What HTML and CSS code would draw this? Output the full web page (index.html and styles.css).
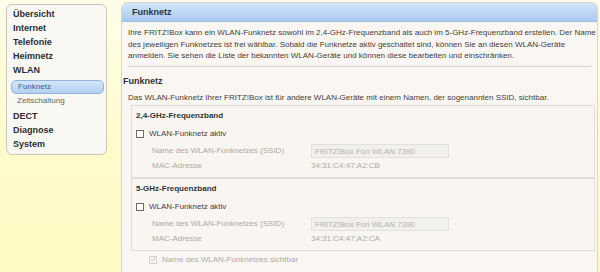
FILE: index.html
```html
<!DOCTYPE html>
<html>
  <head>
    <meta charset="utf-8" />
    <title>FRITZ!Box - Funknetz</title>
    <link rel="stylesheet" href="styles.css">
  </head>
  <body>
    <div class="page">
      <!-- Menu -->
      <nav class="menu">
        <a class="menu-item" href="#">Übersicht</a>
        <a class="menu-item" href="#">Internet</a>
        <a class="menu-item" href="#">Telefonie</a>
        <a class="menu-item" href="#">Heimnetz</a>
        <a class="menu-item" href="#">WLAN</a>
        <a class="menu-sub active" href="#">Funknetz</a>
        <a class="menu-sub" href="#">Zeitschaltung</a>
        <a class="menu-item" href="#">DECT</a>
        <a class="menu-item" href="#">Diagnose</a>
        <a class="menu-item" href="#">System</a>
      </nav>

      <!-- Content -->
      <main class="panel">
        <div class="panel-head">Funknetz</div>
        <div class="panel-body">
          <p class="intro">
            Ihre FRITZ!Box kann ein WLAN-Funknetz sowohl im 2,4-GHz-Frequenzband als auch im 5-GHz-Frequenzband erstellen. Der Name
            des jeweiligen Funknetzes ist frei wählbar. Sobald die Funknetze aktiv geschaltet sind, können Sie an diesen WLAN-Geräte
            anmelden. Sie sehen die Liste der bekannten WLAN-Geräte und können diese bearbeiten und einschränken.
          </p>
          <hr class="divider" />
          <h2 class="section-title">Funknetz</h2>
          <p class="section-text">Das WLAN-Funknetz Ihrer FRITZ!Box ist für andere WLAN-Geräte mit einem Namen, der sogenannten SSID, sichtbar.</p>

          <div class="band">
            <h3 class="band-title">2,4-GHz-Frequenzband</h3>
            <label class="check"><span class="box"></span>WLAN-Funknetz aktiv</label>
            <div class="row">
              <span class="row-label">Name des WLAN-Funknetzes (SSID)</span>
              <span class="field">FRITZ!Box Fon WLAN 7390</span>
            </div>
            <div class="row">
              <span class="row-label">MAC-Adresse</span>
              <span class="value">34:31:C4:47:A2:CB</span>
            </div>
          </div>

          <div class="band">
            <h3 class="band-title">5-GHz-Frequenzband</h3>
            <label class="check"><span class="box"></span>WLAN-Funknetz aktiv</label>
            <div class="row">
              <span class="row-label">Name des WLAN-Funknetzes (SSID)</span>
              <span class="field">FRITZ!Box Fon WLAN 7390</span>
            </div>
            <div class="row">
              <span class="row-label">MAC-Adresse</span>
              <span class="value">34:31:C4:47:A2:CA</span>
            </div>
          </div>

          <label class="check check-off">
            <span class="box box-checked">
              <svg width="7" height="7" viewBox="0 0 7 7"><path d="M1 3.8 L2.8 5.5 L6 1.2" fill="none" stroke="#bdbdb8" stroke-width="1"/></svg>
            </span>
            Name des WLAN-Funknetzes sichtbar
          </label>
        </div>
      </main>
    </div>
  </body>
</html>
```

FILE: styles.css
```css
body {
  margin: 0;
  height: 272px;
  overflow: hidden;
  background: linear-gradient(to bottom, #fffde8, #fffbcb 55%, #fffac4);
  font-family: "Liberation Sans", Arial, sans-serif;
  color: #3a3a3a;
}
.page {
  display: flex;
  align-items: flex-start;
  padding: 2px 2px 0 6px;
}

/* menu */
.menu {
  display: flex;
  flex-direction: column;
  width: 99px;
  margin-top: 2px;
  padding: 2px 0 3px;
  background: #faf8f2;
  border: 1px solid #c9c7bd;
  border-radius: 6px;
}
.menu-item {
  display: block;
  height: 14px;
  line-height: 14px;
  padding-left: 6px;
  font-size: 9px;
  font-weight: bold;
  color: #2b2d35;
  text-decoration: none;
}
.menu-sub {
  display: block;
  height: 12px;
  line-height: 12px;
  margin: 3px 2px 0 4px;
  padding-left: 6px;
  font-size: 8px;
  color: #666;
  text-decoration: none;
  border: 1px solid transparent;
  border-radius: 5px;
}
.menu-sub + .menu-sub {
  height: 14px;
  line-height: 14px;
  margin: 0 2px 1px 4px;
  border: 0;
}
.menu-sub.active {
  color: #3b5f8f;
  background: linear-gradient(to bottom, #d4e6f8, #b3d0f0);
  border-color: #90b4de;
}

/* panel */
.panel {
  flex: 1;
  margin-left: 14px;
  height: 280px;
  background: #faf7f2;
  border: 1px solid #d9d5cb;
  border-radius: 6px 6px 0 0;
}
.panel-head {
  height: 18px;
  line-height: 19px;
  padding-left: 10px;
  font-size: 9px;
  font-weight: bold;
  color: #2f3340;
  background: linear-gradient(to bottom, #d3e6f9, #a9cbef);
  border-bottom: 1px solid #9fc0e4;
  border-radius: 5px 5px 0 0;
}
.panel-body {
  padding: 5px 2px 0 1px;
  font-size: 8px;
}
.intro {
  margin: 0 -2px 0 5px;
  line-height: 11.5px;
  color: #3e3e3e;
}
.divider {
  margin: 4px 4px 8px 5px;
  border: 0;
  border-top: 1px solid #d6d3cb;
}
.section-title {
  margin: 0;
  line-height: 12px;
  font-size: 9px;
  font-weight: bold;
  color: #333;
}
.section-text {
  margin: 5px 0 2px 5px;
  line-height: 11px;
  color: #3e3e3e;
}
.band {
  margin-left: 8px;
  padding: 4px 0 4px 4px;
  background: #f9f6f1;
  border: 1px solid #e0ddd5;
}
.band-title {
  margin: 0;
  line-height: 12px;
  font-size: 8px;
  font-weight: bold;
  color: #333;
}
.check {
  display: flex;
  align-items: center;
  gap: 5px;
  height: 12px;
  margin: 6px 0 3px;
  font-size: 8px;
  color: #3e3e3e;
}
.box {
  display: inline-flex;
  align-items: center;
  justify-content: center;
  width: 6px;
  height: 6px;
  border: 1px solid #6c6c6c;
  background: #fff;
}
.row {
  display: flex;
  align-items: center;
  height: 16px;
  padding-left: 16px;
  color: #a9a9a6;
}
.row + .row {
  height: 14px;
}
.row-label {
  width: 159px;
}
.field {
  width: 133px;
  height: 12px;
  line-height: 13px;
  padding-left: 3px;
  background: #f1f0ec;
  border: 1px solid #e3e0d9;
  color: #b3b3b0;
}
.check-off {
  margin: 3px 0 0 26px;
  color: #aaa;
}
.box-checked {
  border-color: #d3d1cb;
  background: #f7f6f2;
}
```
